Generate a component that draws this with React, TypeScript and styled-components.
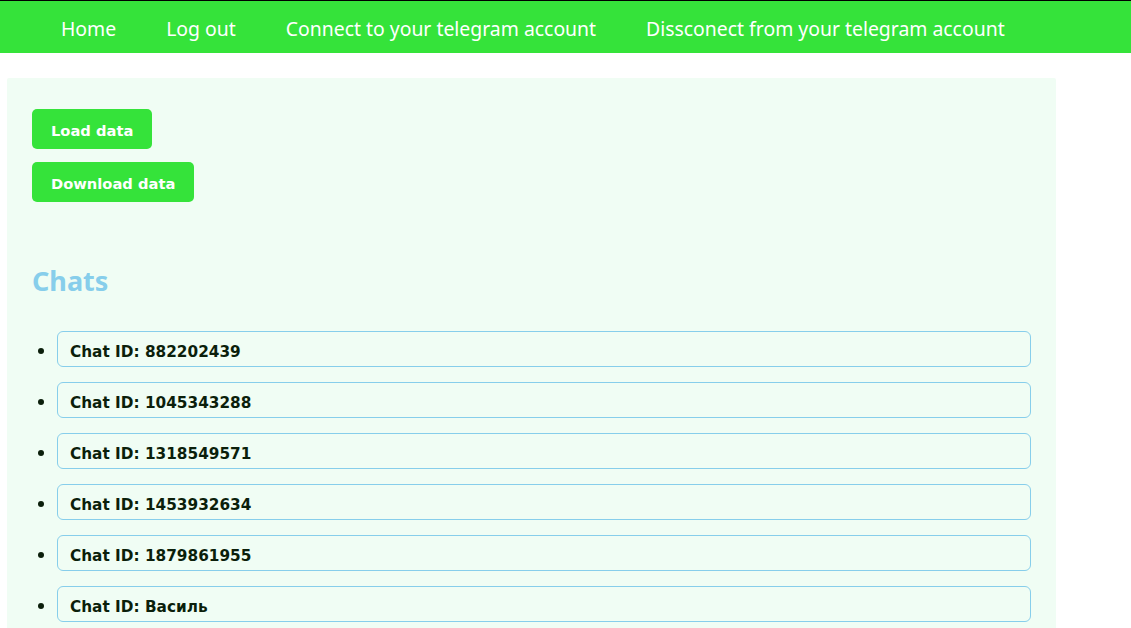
import styled, { createGlobalStyle } from "styled-components";

const GlobalStyle = createGlobalStyle`
  body {
    margin: 0;
    background: #ffffff;
    font-family: "Noto Sans", "Open Sans", sans-serif;
  }
`;

const NavBar = styled.nav`
  display: flex;
  align-items: center;
  gap: 50px;
  height: 53px;
  padding: 3px 0 0 61px;
  box-sizing: border-box;
  background: #35e33a;
  border-top: 1px solid #000;
`;

const NavLink = styled.a`
  color: #ffffff;
  font-family: "Noto Sans", sans-serif;
  font-size: 19.4px;
  text-decoration: none;
  white-space: nowrap;
`;

const Panel = styled.main`
  width: 999px;
  margin: 25px 0 0 7px;
  padding: 31px 25px 25px;
  background: #f0fdf4;
  border-radius: 2px;
`;

const Actions = styled.div`
  display: flex;
  flex-direction: column;
  align-items: flex-start;
  gap: 13px;
`;

const ActionButton = styled.button`
  height: 40px;
  padding: 2px 19px 0;
  border: none;
  border-radius: 5px;
  background: #35e33a;
  color: #ffffff;
  font-family: "DejaVu Sans", Verdana, sans-serif;
  font-weight: bold;
  font-size: 14.7px;
  cursor: pointer;
`;

const Heading = styled.h2`
  margin: 61px 0 0;
  color: #87ceeb;
  font-family: "Noto Sans", sans-serif;
  font-weight: bold;
  font-size: 27px;
  line-height: 36px;
`;

const ChatList = styled.ul`
  display: flex;
  flex-direction: column;
  gap: 15px;
  margin: 32px 0 0;
  padding-left: 25px;
`;

const ChatItem = styled.li`
  height: 36px;
  box-sizing: border-box;
  list-style: disc;
  line-height: 32px;
  padding: 2px 0 0 12px;
  border: 1px solid #87ceeb;
  border-radius: 6px;
  color: #0b1f0b;
  font-family: "DejaVu Sans", Verdana, sans-serif;
  font-weight: bold;
  font-size: 15.3px;

  &::marker {
    font-size: 19px;
  }
`;

const chats = [
  "882202439",
  "1045343288",
  "1318549571",
  "1453932634",
  "1879861955",
  "Василь",
];

export default function App() {
  return (
    <>
      <GlobalStyle />
      <NavBar>
        <NavLink href="#">Home</NavLink>
        <NavLink href="#">Log out</NavLink>
        <NavLink href="#">Connect to your telegram account</NavLink>
        <NavLink href="#">Dissconect from your telegram account</NavLink>
      </NavBar>
      <Panel>
        <Actions>
          <ActionButton>Load data</ActionButton>
          <ActionButton>Download data</ActionButton>
        </Actions>
        <Heading>Chats</Heading>
        <ChatList>
          {chats.map((id) => (
            <ChatItem key={id}>Chat ID: {id}</ChatItem>
          ))}
        </ChatList>
      </Panel>
    </>
  );
}
